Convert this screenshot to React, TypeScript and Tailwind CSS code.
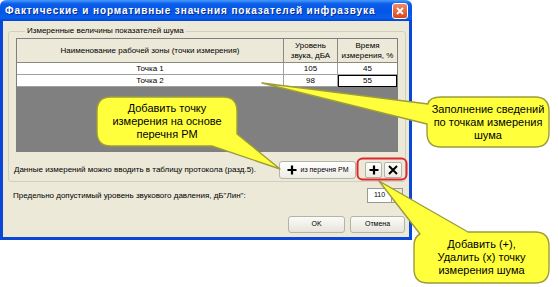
import React from 'react';

const rows = [
  { name: 'Точка 1', level: '105', time: '45' },
  { name: 'Точка 2', level: '98', time: '55' },
];

function PlusIcon() {
  return (
    <svg width="10" height="10" viewBox="0 0 10 10">
      <path d="M5 0.5V9.5M0.5 5H9.5" stroke="#000" strokeWidth="2.2" />
    </svg>
  );
}

function CrossIcon() {
  return (
    <svg width="10" height="10" viewBox="0 0 10 10">
      <path d="M1 1L9 9M9 1L1 9" stroke="#000" strokeWidth="2" />
    </svg>
  );
}

function Callouts() {
  return (
    <>
      <svg className="pointer-events-none absolute left-0 top-0" width="558" height="287">
        <g fill="#ffff3c" stroke="#9c9c3a" strokeWidth="1.4" strokeLinejoin="round">
          {/* bubble pointing at "из перечня РМ" */}
          <path d="M111 97H223Q237 97 237 111V134L280 169L212 146H111Q97 146 97 132V111Q97 97 111 97Z" />
          {/* bubble pointing at the table rows */}
          <path d="M441 97H535Q549 97 549 111V133Q549 147 535 147H441Q427 147 427 133V124L262 83L428 104Q429 97 441 97Z" />
          {/* bubble pointing at +/x buttons */}
          <path d="M468 232H535Q549 232 549 246V269Q549 283 535 283H428Q414 283 414 269V246Q414 237 420 234L379 181Z" />
        </g>
        <rect x="357.5" y="158.5" width="49" height="21" rx="5" fill="none" stroke="#e0282c" strokeWidth="2" />
      </svg>
      <div className="absolute left-[97px] top-[97px] flex h-[49px] w-[140px] items-center justify-center text-center text-[11px] leading-[13px] text-black">
        Добавить точку<br />измерения на основе<br />перечня РМ
      </div>
      <div className="absolute left-[427px] top-[97px] flex h-[50px] w-[122px] items-center justify-center text-center text-[11px] leading-[13px] text-black">
        Заполнение сведений<br />по точкам измерения<br />шума
      </div>
      <div className="absolute left-[414px] top-[232px] flex h-[51px] w-[135px] items-center justify-center text-center text-[11px] leading-[13px] text-black">
        Добавить (+),<br />Удалить (x) точку<br />измерения шума
      </div>
    </>
  );
}

export default function App() {
  return (
    <div className="relative h-[287px] w-[558px] overflow-hidden bg-white font-['Liberation_Sans',Arial,sans-serif] text-[8px] text-black">
      <div className="flex w-[412px] flex-col">
        {/* title bar */}
        <div className="flex h-[21px] items-center justify-between rounded-t-[6px] bg-[linear-gradient(to_bottom,#4a9cff_0%,#0c5ee9_18%,#0256e6_55%,#0a5ff0_85%,#0046d0_100%)]">
          <span className="pl-[5px] text-[10px] font-bold tracking-[0.9px] text-white [text-shadow:1px_1px_0_#0a2a8a]">
            Фактические и нормативные значения показателей инфразвука
          </span>
          <div className="mr-[4px] flex h-[16px] w-[16px] items-center justify-center rounded-[3px] border border-white bg-[linear-gradient(to_bottom,#f08a68,#d9461f)]">
            <svg width="8" height="8" viewBox="0 0 8 8">
              <path d="M1 1L7 7M7 1L1 7" stroke="#fff" strokeWidth="1.8" />
            </svg>
          </div>
        </div>

        {/* body */}
        <div className="flex flex-col border-x-[3px] border-b-[3px] border-[#0a46d8] bg-[#ece9d8] pb-[4px]">
          <fieldset className="ml-[5px] mt-[5px] w-[398px] rounded-[3px] border border-[#d0d0bf] px-[7px] pb-[2px] pt-[2px]">
            <legend className="ml-[9px] px-[2px] leading-[10px]">Измеренные величины показателей шума</legend>

            {/* grid */}
            <div className="flex h-[114px] w-[382px] flex-col border border-[#7f7f7f] bg-[#808080]">
              <div className="flex h-[24px] bg-[#ece9d8] leading-[10px]">
                <div className="flex w-[267px] items-center justify-center border-b border-r border-[#8a8a80]">
                  Наименование рабочей зоны (точки измерения)
                </div>
                <div className="flex w-[54px] items-center justify-center border-b border-r border-[#8a8a80] text-center">
                  Уровень<br />звука, дБА
                </div>
                <div className="flex flex-1 items-center justify-center border-b border-[#8a8a80] text-center">
                  Время<br />измерения, %
                </div>
              </div>
              {rows.map((r, i) => (
                <div key={r.name} className="flex h-[12px] bg-white leading-[10px]">
                  <div className="flex w-[267px] items-center justify-center border-b border-r border-[#a0a0a0]">{r.name}</div>
                  <div className="flex w-[54px] items-center justify-center border-b border-r border-[#a0a0a0]">{r.level}</div>
                  <div
                    className={
                      i === 1
                        ? 'flex flex-1 items-center justify-center border border-black'
                        : 'flex flex-1 items-center justify-center border-b border-[#a0a0a0]'
                    }
                  >
                    {r.time}
                  </div>
                </div>
              ))}
            </div>

            <div className="mt-[9px] flex h-[18px] items-center">
              <span className="-ml-[2px] flex-1">Данные измерений можно вводить в таблицу протокола (разд.5).</span>
              <button className="flex h-[18px] w-[77px] items-center justify-center gap-[4px] rounded-[3px] border border-[#b5b3a6] bg-[linear-gradient(to_bottom,#ffffff,#ecebe4)] text-[7px]">
                <PlusIcon />
                из перечня РМ
              </button>
              <button className="ml-[9px] flex h-[16px] w-[17px] items-center justify-center rounded-[2px] border border-[#b5b3a6] bg-[linear-gradient(to_bottom,#ffffff,#ecebe4)]">
                <PlusIcon />
              </button>
              <button className="-mr-[4px] ml-[2px] flex h-[16px] w-[18px] items-center justify-center rounded-[2px] border border-[#b5b3a6] bg-[linear-gradient(to_bottom,#ffffff,#ecebe4)]">
                <CrossIcon />
              </button>
            </div>
          </fieldset>

          <div className="mt-[6px] flex h-[15px] items-center pl-[10px] pr-[6px]">
            <span className="flex-1">Предельно допустимый уровень звукового давления, дБ"Лин":</span>
            <div className="flex h-[15px] w-[25px] items-center justify-center border border-[#9a9a90] bg-white text-[7px]">110</div>
            <div className="h-[15px] w-[11px] border border-l-0 border-[#9a9a90] bg-[#ece9d8]" />
          </div>

          <div className="mt-[13px] flex h-[17px] justify-end gap-[5px] pr-[4px]">
            <button className="w-[57px] rounded-[3px] border border-[#b5b3a6] bg-[linear-gradient(to_bottom,#fbfbf8,#e6e4da)] text-[7px]">OK</button>
            <button className="w-[55px] rounded-[3px] border border-[#b5b3a6] bg-[linear-gradient(to_bottom,#fbfbf8,#e6e4da)] text-[7px]">Отмена</button>
          </div>
        </div>
      </div>

      <Callouts />
    </div>
  );
}
